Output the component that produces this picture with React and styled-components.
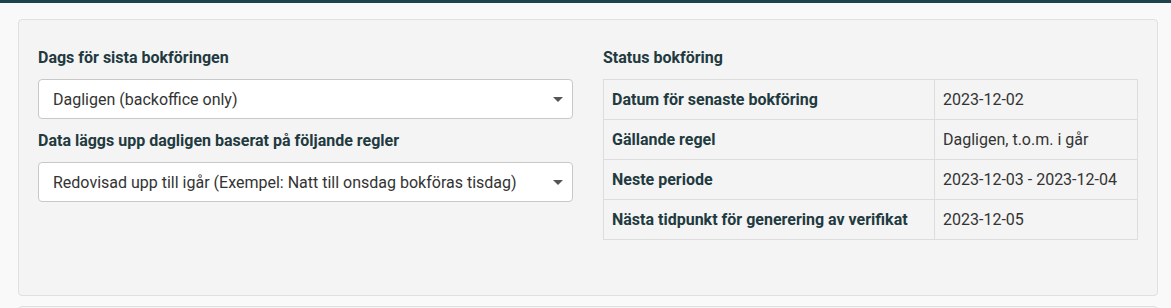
import React from "react";
import styled, { createGlobalStyle } from "styled-components";

const GlobalStyle = createGlobalStyle`
  html, body {
    margin: 0;
    padding: 0;
    background: #f9f9f9;
    font-family: Roboto, "Liberation Sans", Arial, sans-serif;
    color: #333;
  }
  * {
    box-sizing: border-box;
  }
`;

const TopBar = styled.div`
  height: 3px;
  background: #1d434b;
`;

const Page = styled.div`
  padding: 16px 13px 0 18px;
`;

const Well = styled.div`
  background: #f4f4f4;
  border: 1px solid #e0e0e0;
  border-radius: 4px;
  padding: 28px 19px ${(props) => props.bottom || 55}px;
  margin-bottom: 10px;
`;

const Row = styled.div`
  display: grid;
  grid-template-columns: 1fr 1fr;
  column-gap: 30px;
`;

const Column = styled.div`
  display: flex;
  flex-direction: column;
`;

const FormGroup = styled.div`
  margin-bottom: 12px;
`;

const Label = styled.div`
  font-size: 16px;
  font-weight: 700;
  line-height: 20px;
  color: #1f3a40;
  margin-bottom: 11px;
`;

const SelectBox = styled.div`
  position: relative;
  height: 40px;
  background: #fff;
  border: 1px solid #c8c8c8;
  border-radius: 4px;
  padding: 0 30px 0 14px;
  display: flex;
  align-items: center;
  font-size: 16px;
  color: #333;
`;

const Caret = styled.span`
  position: absolute;
  right: 9px;
  top: 17px;
  width: 0;
  height: 0;
  border-left: 5px solid transparent;
  border-right: 5px solid transparent;
  border-top: 5px solid #555;
`;

const Table = styled.table`
  width: 100%;
  border-collapse: collapse;
  border: 1px solid #ddd;
`;

const HeadCell = styled.th`
  width: 331px;
  text-align: left;
  font-size: 16px;
  font-weight: 700;
  color: #1f3a40;
  border: 1px solid #ddd;
  padding: 9px 8px;
  height: 40px;
  line-height: 20px;
`;

const ValueCell = styled.td`
  font-size: 16px;
  color: #333;
  border: 1px solid #ddd;
  padding: 9px 8px;
  height: 40px;
  line-height: 20px;
`;

const Select = ({ value }) => (
  <SelectBox>
    {value}
    <Caret />
  </SelectBox>
);

const statusRows = [
  ["Datum för senaste bokföring", "2023-12-02"],
  ["Gällande regel", "Dagligen, t.o.m. i går"],
  ["Neste periode", "2023-12-03 - 2023-12-04"],
  ["Nästa tidpunkt för generering av verifikat", "2023-12-05"],
];

const App = () => (
  <>
    <GlobalStyle />
    <TopBar />
    <Page>
      <Well>
        <Row>
          <Column>
            <FormGroup>
              <Label>Dags för sista bokföringen</Label>
              <Select value="Dagligen (backoffice only)" />
            </FormGroup>
            <FormGroup>
              <Label>Data läggs upp dagligen baserat på följande regler</Label>
              <Select value="Redovisad upp till igår (Exempel: Natt till onsdag bokföras tisdag)" />
            </FormGroup>
          </Column>
          <Column>
            <Label>Status bokföring</Label>
            <Table>
              <tbody>
                {statusRows.map(([name, value]) => (
                  <tr key={name}>
                    <HeadCell>{name}</HeadCell>
                    <ValueCell>{value}</ValueCell>
                  </tr>
                ))}
              </tbody>
            </Table>
          </Column>
        </Row>
      </Well>
      <Well bottom={40} />
    </Page>
  </>
);

export default App;
